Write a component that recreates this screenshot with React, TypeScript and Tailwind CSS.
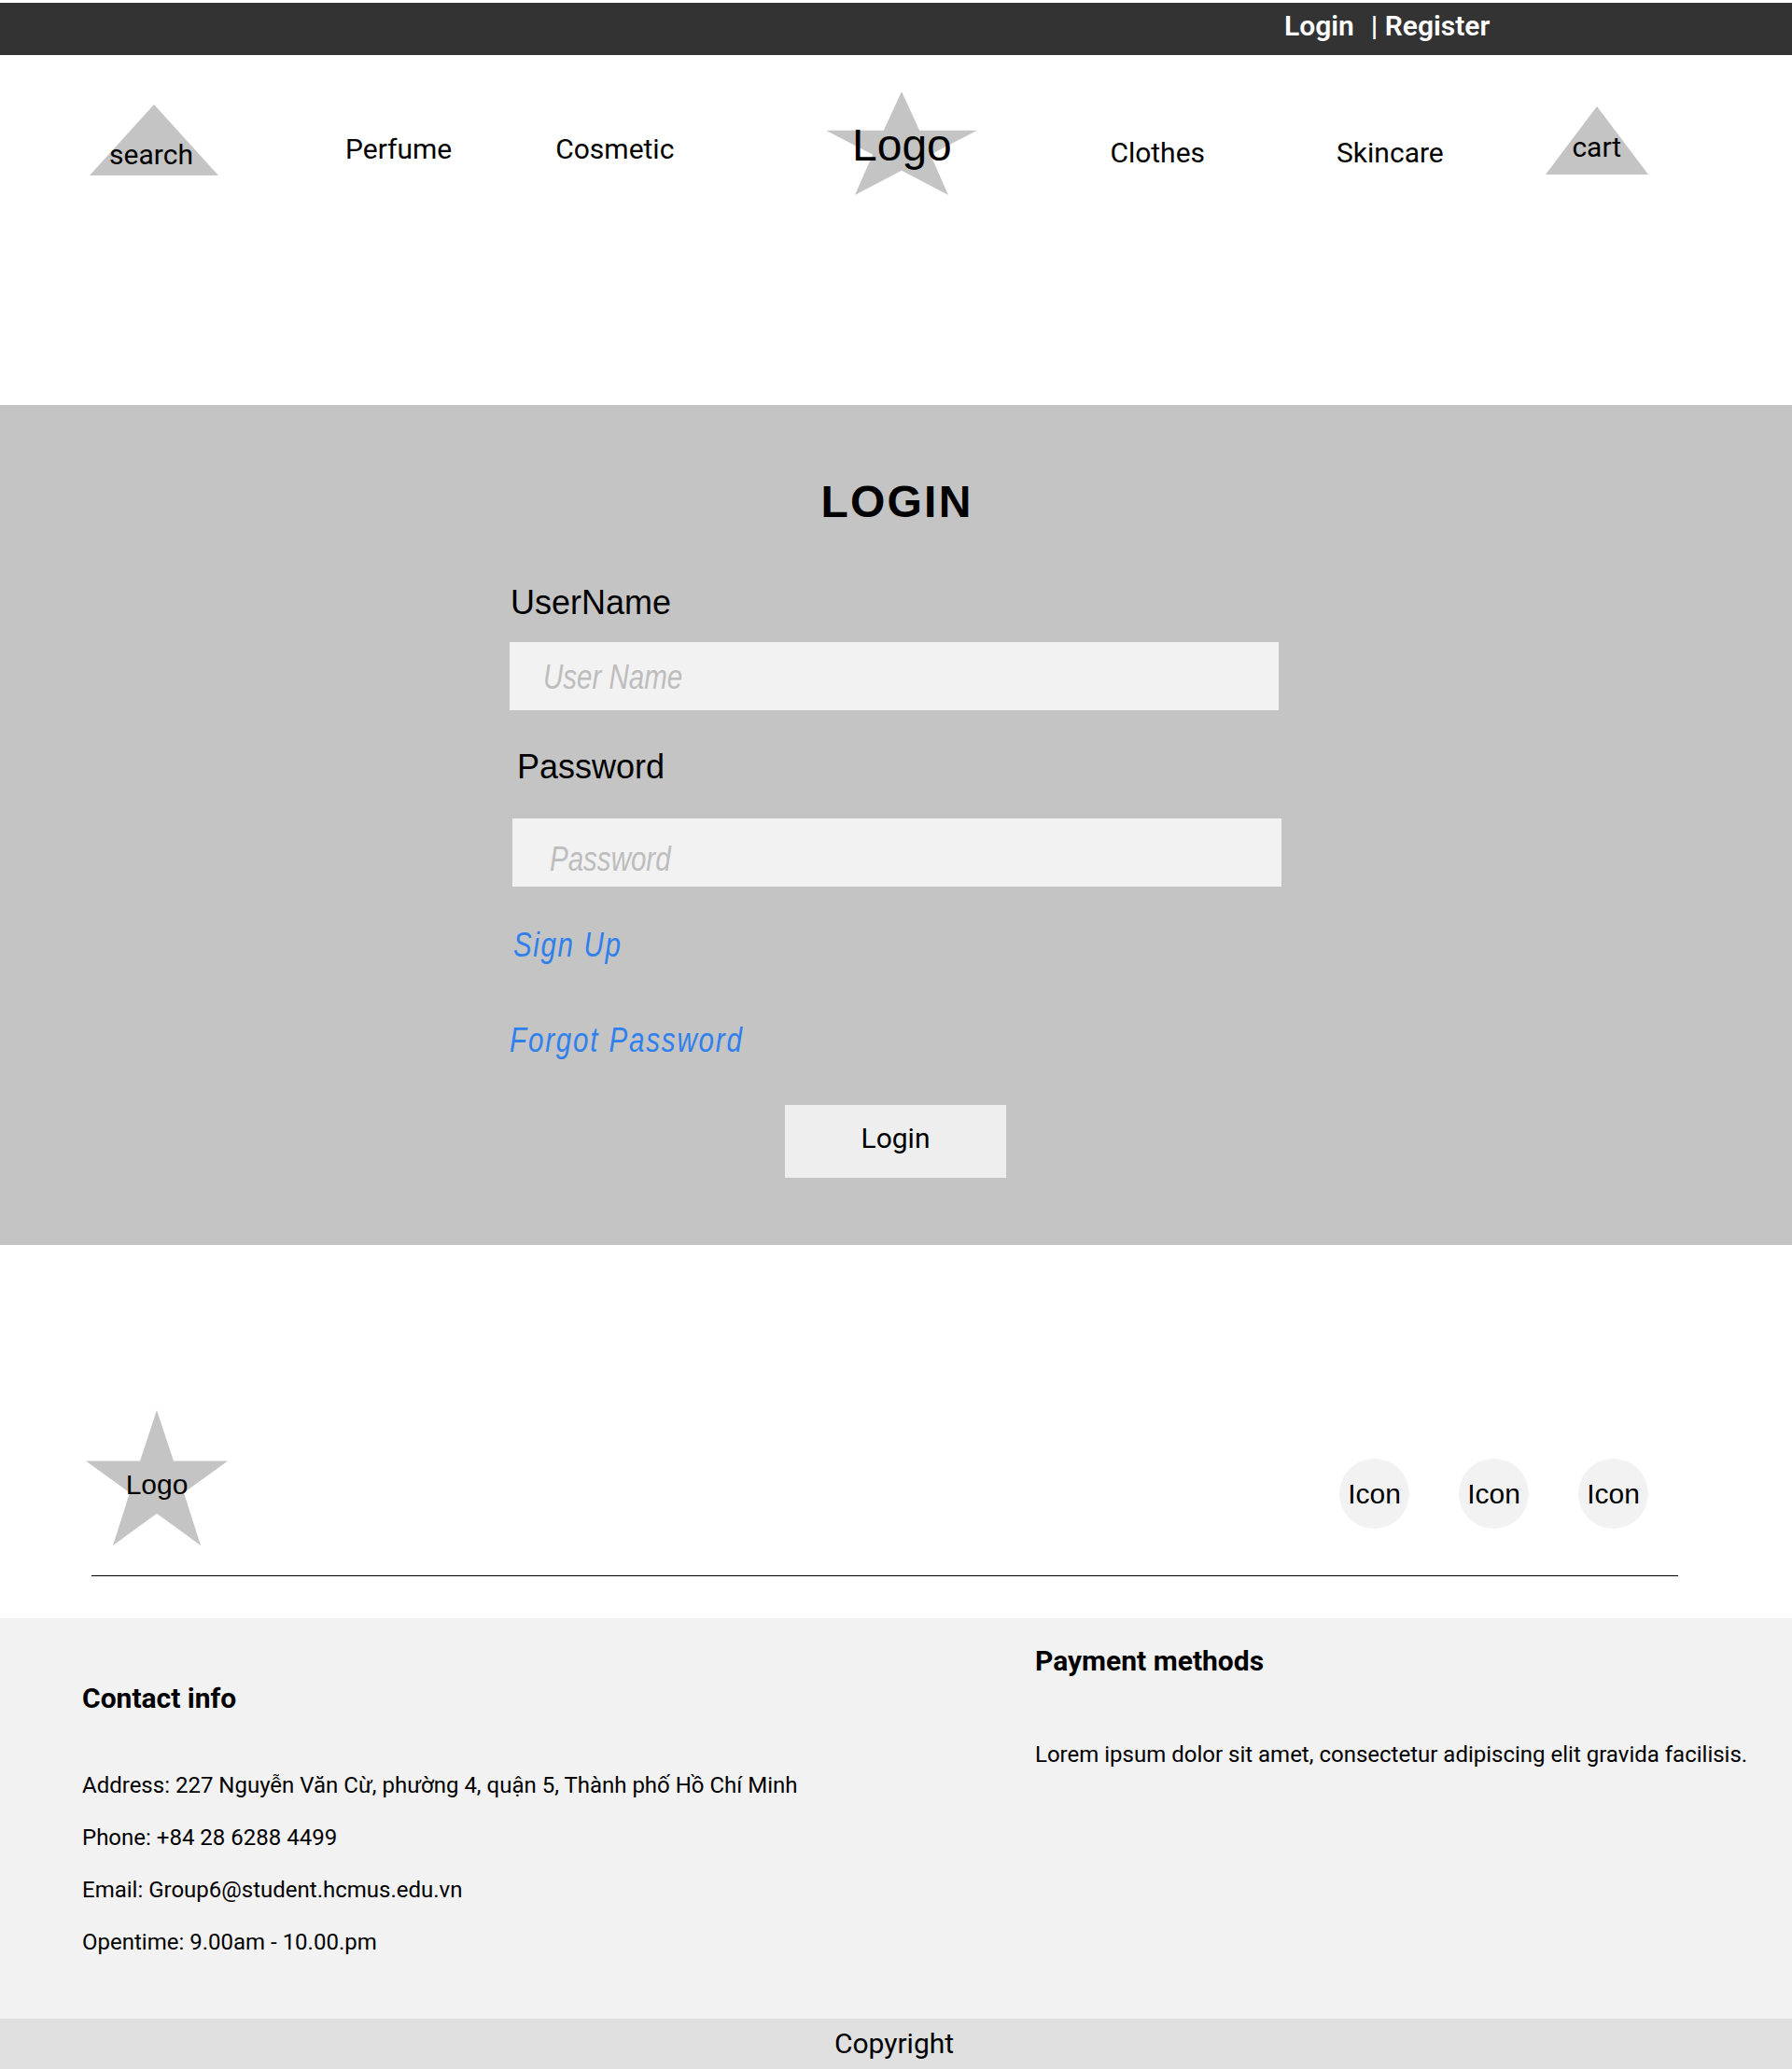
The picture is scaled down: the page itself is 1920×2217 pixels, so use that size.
import type { ReactNode } from 'react'

const arial = 'font-["Liberation_Sans",Arial,sans-serif]'

const Triangle = () => (
  <svg viewBox="0 0 100 100" preserveAspectRatio="none" className="absolute inset-0 w-full h-full">
    <polygon points="50,0 100,100 0,100" fill="#C4C4C4" />
  </svg>
)

const Star = () => (
  <svg viewBox="0 0 152 144" preserveAspectRatio="none" className="absolute inset-0 w-full h-full">
    <polygon points="76,0 94,54 152,54 105,88 123,144 76,110 29,144 47,88 0,54 58,54" fill="#C4C4C4" />
  </svg>
)

const Shape = ({ className, children }: { className: string; children: ReactNode }) => (
  <div className={`relative shrink-0 flex justify-center items-start ${className}`}>{children}</div>
)

const Narrow = ({ className, children }: { className: string; children: ReactNode }) => (
  <span className={`block origin-left scale-x-[82%] text-[36px] italic whitespace-nowrap ${className}`}>{children}</span>
)

const FormInput = ({ label, className }: { label: string; className: string }) => (
  <div className={`w-[824px] h-[73px] bg-[#F2F2F2] ${className}`}>
    <Narrow className="leading-[73px] text-[#BDBDBD]">{label}</Narrow>
  </div>
)

const contacts = [
  'Address: 227 Nguyễn Văn Cừ, phường 4, quận 5, Thành phố Hồ Chí Minh',
  'Phone: +84 28 6288 4499',
  'Email: Group6@student.hcmus.edu.vn',
  'Opentime: 9.00am - 10.00.pm',
]

const App = () => {
  return (
    <div className="w-[1920px] h-[2217px] bg-white font-[Roboto,sans-serif] text-black overflow-hidden">
      {/* top bar */}
      <div className="pt-[3px]">
        <div className="h-[56px] bg-[#333333] text-white text-[30px] font-semibold flex items-center pl-[1376px] pb-[6px] leading-none">
          <span>Login</span>
          <span className="ml-[18px]">| Register</span>
        </div>
      </div>

      {/* nav */}
      <div className="h-[375px] flex items-start pl-[96px] text-[30px] leading-[45px]">
        <Shape className="mt-[53px] w-[138px] h-[76px] pt-[31px] pr-[6px]">
          <Triangle />
          <span className="relative">search</span>
        </Shape>
        <span className="mt-[78px] ml-[136px]">Perfume</span>
        <span className="mt-[78px] ml-[111px]">Cosmetic</span>
        <Shape className="mt-[39px] ml-[163px] w-[162px] h-[111px] pt-[22px]">
          <Star />
          <span className={`relative text-[48px] leading-[72px] ${arial}`}>Logo</span>
        </Shape>
        <span className="mt-[82px] ml-[142px]">Clothes</span>
        <span className="mt-[82px] ml-[141px]">Skincare</span>
        <Shape className="mt-[55px] ml-[109px] w-[110px] h-[73px] pt-[21px]">
          <Triangle />
          <span className="relative">cart</span>
        </Shape>
      </div>

      {/* login form */}
      <div className={`h-[900px] bg-[#C4C4C4] flex flex-col pl-[546px] ${arial}`}>
        <h1 className="pt-[76px] w-[830px] text-center text-[48px] leading-[56px] font-bold tracking-[2.25px]">LOGIN</h1>
        <label className="mt-[59px] ml-[1px] text-[36px] leading-[42px]">UserName</label>
        <FormInput label="User Name" className="mt-[21px] pl-[36px] pt-[1px]" />
        <label className="mt-[40px] ml-[8px] text-[36px] leading-[42px]">Password</label>
        <FormInput label="Password" className="mt-[34px] ml-[3px] pl-[40px] pt-[7px]" />
        <a className="mt-[42px] ml-[4px]">
          <Narrow className="leading-[42px] tracking-[2px] text-[#2F80ED]">Sign Up</Narrow>
        </a>
        <a className="mt-[60px]">
          <Narrow className="leading-[42px] tracking-[2.25px] text-[#2F80ED]">Forgot Password</Narrow>
        </a>
        <button className="mt-[48px] ml-[295px] w-[237px] h-[78px] bg-[#EEEEEE] font-[Roboto,sans-serif] text-[30px] pb-[8px]">
          Login
        </button>
      </div>

      {/* footer top */}
      <div className={`h-[400px] pt-[177px] ${arial}`}>
        <div className="flex items-start pl-[92px] pr-[154px]">
          <Shape className="w-[152px] h-[145px] pt-[62px]">
            <Star />
            <span className="relative text-[30px] leading-[36px]">Logo</span>
          </Shape>
          <div className="ml-auto mt-[52px] flex gap-[53px]">
            {[0, 1, 2].map((i) => (
              <div key={i} className="w-[75px] h-[75px] rounded-full bg-[#F2F2F2] flex items-center justify-center text-[30px]">
                Icon
              </div>
            ))}
          </div>
        </div>
        <div className="mt-[32px] ml-[98px] w-[1700px] h-px bg-black" />
      </div>

      {/* footer info */}
      <div className="h-[429px] bg-[#F2F2F2] flex text-[24px] leading-[36px]">
        <div className="w-[1109px] pl-[88px] pt-[63px]">
          <div className="text-[30px] leading-[45px] font-bold">Contact info</div>
          <div className="mt-[53px] flex flex-col gap-[20px]">
            {contacts.map((line) => (
              <div key={line}>{line}</div>
            ))}
          </div>
        </div>
        <div className="pt-[23px]">
          <div className="text-[30px] leading-[45px] font-bold">Payment methods</div>
          <div className="mt-[60px]">Lorem ipsum dolor sit amet, consectetur adipiscing elit gravida facilisis.</div>
        </div>
      </div>

      {/* copyright */}
      <div className="h-[54px] bg-[#E0E0E0] flex items-center justify-center text-[30px] pr-[4px] pb-[2px]">Copyright</div>
    </div>
  )
}

export default App
